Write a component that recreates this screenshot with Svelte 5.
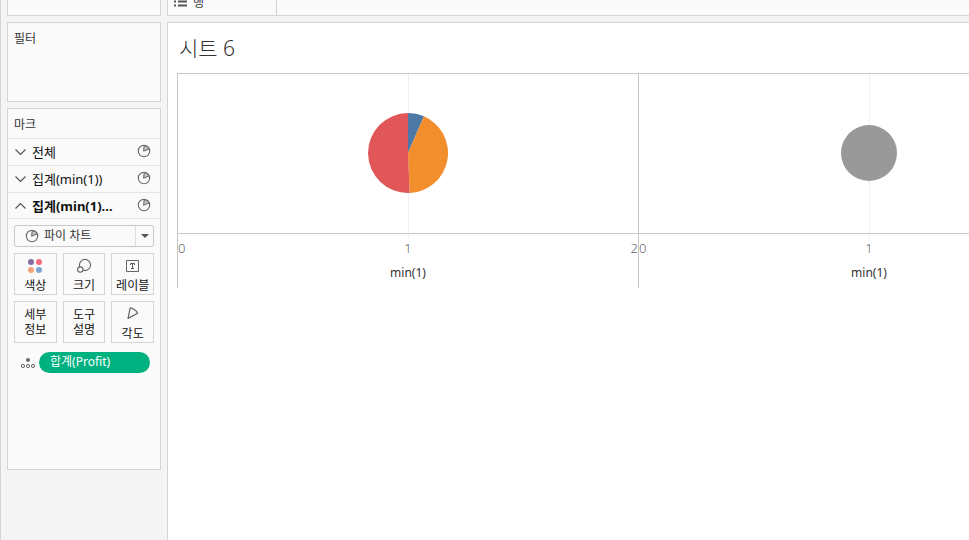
<script>
  const layers = [
    { name: '전체', open: false },
    { name: '집계(min(1))', open: false },
    { name: '집계(min(1)...', open: true }
  ];

  const panes = [
    {
      radius: 40,
      ticks: [0, 1, 2],
      slices: [
        { from: 0, to: 0.0655, color: '#4e79a7' },
        { from: 0.0655, to: 0.4935, color: '#f28e2b' },
        { from: 0.4935, to: 1, color: '#e15759' }
      ]
    },
    { radius: 28, ticks: [0, 1], slices: [] }
  ];

  function point(fraction, r) {
    const a = fraction * 2 * Math.PI;
    return `${(40 + r * Math.sin(a)).toFixed(3)} ${(40 - r * Math.cos(a)).toFixed(3)}`;
  }

  function wedge(slice, r) {
    const large = slice.to - slice.from > 0.5 ? 1 : 0;
    return `M40 40L${point(slice.from, r)}A${r} ${r} 0 ${large} 1 ${point(slice.to, r)}Z`;
  }
</script>

{#snippet pieIcon()}
  <svg class="pie-icon" width="14" height="14" viewBox="0 0 14 14" aria-hidden="true">
    <circle cx="7" cy="7" r="5.7" fill="none" stroke="#666" stroke-width="1.1" />
    <path d="M6.6 7.2L7.2 1.6A5.6 5.6 0 0 1 12 5Z" fill="#c4c4c4" stroke="#666" stroke-width="1" stroke-linejoin="round" />
  </svg>
{/snippet}

<div class="app">
  <aside class="side">
    <section class="card pages" aria-label="페이지"></section>

    <section class="card filters">
      <h2>필터</h2>
    </section>

    <section class="card marks">
      <h2>마크</h2>
      {#each layers as layer}
        <button type="button" class="layer" class:open={layer.open} aria-expanded={layer.open}>
          <svg width="11" height="8" viewBox="0 0 11 8" aria-hidden="true">
            <path d={layer.open ? 'M0.5 6.5L5.5 1.5L10.5 6.5' : 'M0.5 1.5L5.5 6.5L10.5 1.5'} fill="none" stroke="#555" stroke-width="1.2" />
          </svg>
          <span>{layer.name}</span>
          {@render pieIcon()}
        </button>
      {/each}

      <div class="controls">
        <div class="picker">
          {@render pieIcon()}
          <select aria-label="마크 유형">
            <option>파이 차트</option>
          </select>
          <span class="arrow"></span>
        </div>

        <div class="tiles">
          <button type="button" class="with-icon">
            <svg width="16" height="16" viewBox="0 0 16 16" aria-hidden="true">
              <circle cx="4" cy="4" r="3" fill="#856fa0" />
              <circle cx="12" cy="4" r="3" fill="#fb6a7c" />
              <circle cx="4" cy="12" r="3" fill="#f3a47a" />
              <circle cx="12" cy="12" r="3" fill="#7fa3cf" />
            </svg>
            <span>색상</span>
          </button>
          <button type="button" class="with-icon">
            <svg width="16" height="16" viewBox="0 0 16 16" aria-hidden="true">
              <circle cx="9" cy="7" r="5.6" fill="none" stroke="#666" stroke-width="1.1" />
              <circle cx="4.3" cy="11.6" r="2.7" fill="#fafafa" stroke="#666" stroke-width="1.1" />
            </svg>
            <span>크기</span>
          </button>
          <button type="button" class="with-icon">
            <svg width="16" height="16" viewBox="0 0 16 16" aria-hidden="true">
              <path d="M1.5 2.5H13.5V13.5H1.5Z" fill="none" stroke="#666" />
              <path d="M5.5 7V5.5H9.5V7M7.5 5.5V10.5M6 10.5H9" fill="none" stroke="#555" />
            </svg>
            <span>레이블</span>
          </button>
          <button type="button"><span>세부<br />정보</span></button>
          <button type="button"><span>도구<br />설명</span></button>
          <button type="button" class="with-icon">
            <svg width="16" height="16" viewBox="0 0 16 16" aria-hidden="true">
              <path d="M5.2 1.8C6.8 1.6 11.8 4.9 12.6 7.2L3 12.4Z" fill="none" stroke="#666" stroke-width="1.2" stroke-linejoin="round" />
            </svg>
            <span>각도</span>
          </button>
        </div>

        <div class="pill-row">
          <svg width="14" height="12" viewBox="0 0 14 12" aria-hidden="true">
            <circle cx="7" cy="3" r="2" fill="#666" />
            <g fill="none" stroke="#666">
              <circle cx="2" cy="9" r="1.6" />
              <circle cx="7" cy="9" r="1.6" />
              <circle cx="12" cy="9" r="1.6" />
            </g>
          </svg>
          <button type="button" class="pill">합계(Profit)</button>
        </div>
      </div>
    </section>
  </aside>

  <main>
    <div class="shelf">
      <div class="shelf-name">
        <svg width="13" height="11" viewBox="0 0 13 11" aria-hidden="true">
          <path d="M0 1.5H2M4 1.5H13M0 5.5H2M4 5.5H13M0 9.5H2M4 9.5H13" stroke="#555" stroke-width="2" />
        </svg>
        <span>행</span>
      </div>
    </div>

    <section class="sheet">
      <h1>시트 6</h1>
      <div class="chart">
        {#each panes as pane}
          <div class="pane">
            <div class="plot">
              <svg width="80" height="80" viewBox="0 0 80 80" role="img" aria-label="파이 차트">
                {#each pane.slices as slice}
                  <path d={wedge(slice, pane.radius)} fill={slice.color} />
                {:else}
                  <circle cx="40" cy="40" r={pane.radius} fill="#999" />
                {/each}
              </svg>
            </div>
            <div class="axis">
              {#each pane.ticks as tick}<span>{tick}</span>{/each}
            </div>
            <div class="axis-title">min(1)</div>
          </div>
        {/each}
      </div>
    </section>
  </main>
</div>

<style>
  :global(body) {
    margin: 0;
    background: #f4f4f4;
  }

  .app {
    display: flex;
    box-sizing: border-box;
    height: 100vh;
    overflow: hidden;
    border-left: 1px solid #d4d4d4;
    background: #f4f4f4;
    color: #333;
    font-family: 'Noto Sans', 'Noto Sans CJK KR', sans-serif;
    font-size: 12px;
    line-height: 16px;
  }

  button,
  select {
    margin: 0;
    padding: 0;
    border: 0;
    background: none;
    color: #111;
    font: inherit;
  }

  svg {
    display: block;
    flex: none;
  }

  .side {
    display: flex;
    flex: none;
    flex-direction: column;
    gap: 6px;
    box-sizing: border-box;
    width: 166px;
    padding: 0 6px;
  }

  .card {
    box-sizing: border-box;
    border: 1px solid #d4d4d4;
    background: #fafafa;
  }

  .pages {
    height: 16px;
    border-top: 0;
  }

  .filters {
    height: 80px;
  }

  .marks {
    height: 362px;
  }

  h2 {
    margin: 0;
    padding: 8px 6px 5px;
    font-size: 12px;
    font-weight: 400;
    line-height: 16px;
  }

  .layer {
    display: flex;
    align-items: center;
    gap: 6px;
    box-sizing: border-box;
    width: 100%;
    height: 27px;
    padding: 0 9px 0 7px;
    border-top: 1px solid #e4e4e4;
    font-size: 13px;
    text-align: left;
  }

  .layer span {
    flex: 1;
    white-space: nowrap;
  }

  .layer :global(.pie-icon) {
    margin-bottom: 2px;
  }

  .open {
    height: 26px;
    font-weight: 700;
  }

  .controls {
    display: flex;
    flex-direction: column;
    gap: 6px;
    padding: 6px;
    border-top: 1px solid #e4e4e4;
  }

  .picker {
    position: relative;
    box-sizing: border-box;
    height: 22px;
    border: 1px solid #c8c8c8;
    border-radius: 2px;
  }

  .picker :global(.pie-icon) {
    position: absolute;
    top: 3px;
    left: 10px;
  }

  .picker select {
    width: 100%;
    height: 20px;
    padding-left: 29px;
    appearance: none;
    color: #333;
  }

  .arrow {
    position: absolute;
    top: 0;
    right: 0;
    display: grid;
    place-items: center;
    width: 17px;
    height: 20px;
    border-left: 1px solid #ddd;
    pointer-events: none;
  }

  .arrow::before {
    border: 4px solid transparent;
    border-top-color: #555;
    border-bottom: 0;
    content: '';
  }

  .tiles {
    display: grid;
    grid-template-columns: repeat(3, 1fr);
    gap: 6px;
  }

  .tiles button {
    display: flex;
    flex-direction: column;
    align-items: center;
    justify-content: center;
    gap: 4px;
    height: 42px;
    border: 1px solid #d4d4d4;
    line-height: 15px;
    white-space: nowrap;
  }

  .tiles .with-icon {
    justify-content: flex-start;
    padding-top: 4px;
  }

  .pill-row {
    display: flex;
    align-items: center;
    gap: 4px;
    padding: 3px 4px 0 7px;
  }

  .pill {
    flex: 1;
    height: 21px;
    padding: 0 11px 2px;
    border-radius: 11px;
    background: #00b180;
    color: #fff;
    text-align: left;
  }

  main {
    display: flex;
    flex: 1;
    flex-direction: column;
    gap: 6px;
    min-width: 0;
  }

  .shelf {
    display: flex;
    flex: none;
    box-sizing: border-box;
    height: 16px;
    border: solid #d4d4d4;
    border-width: 0 0 1px 1px;
    background: #fafafa;
  }

  .shelf-name {
    display: flex;
    align-items: flex-end;
    gap: 6px;
    box-sizing: border-box;
    width: 109px;
    padding: 0 6px 4px;
    border-right: 1px solid #d4d4d4;
  }

  .shelf-name svg {
    margin-bottom: 4px;
  }

  .sheet {
    flex: 1;
    border: solid #d4d4d4;
    border-width: 1px 0 0 1px;
    background: #fff;
  }

  h1 {
    margin: 0;
    padding: 12px 11px;
    font-size: 21px;
    font-weight: 300;
    line-height: 26px;
  }

  .chart {
    display: flex;
    margin-left: 9px;
    overflow: hidden;
    border-top: 1px solid #c8c8c8;
  }

  .pane {
    flex: none;
    box-sizing: border-box;
    width: 461px;
    height: 214px;
    border-left: 1px solid #c8c8c8;
  }

  .plot {
    display: grid;
    place-items: center;
    box-sizing: border-box;
    height: 160px;
    padding-bottom: 1px;
    border-bottom: 1px solid #c8c8c8;
    background: linear-gradient(#f0f0f0, #f0f0f0) center / 1px 100% no-repeat;
  }

  .axis {
    display: grid;
    grid-template-columns: 1fr 1fr 1fr;
    padding: 5px 0 7px;
    color: #666;
    font-size: 13px;
    font-weight: 300;
    line-height: 18px;
    background: linear-gradient(#f0f0f0, #f0f0f0) top / 1px 4px no-repeat;
  }

  .axis span:nth-child(2) {
    text-align: center;
  }

  .axis span:nth-child(3) {
    text-align: right;
  }

  .axis-title {
    text-align: center;
    line-height: 18px;
  }
</style>
